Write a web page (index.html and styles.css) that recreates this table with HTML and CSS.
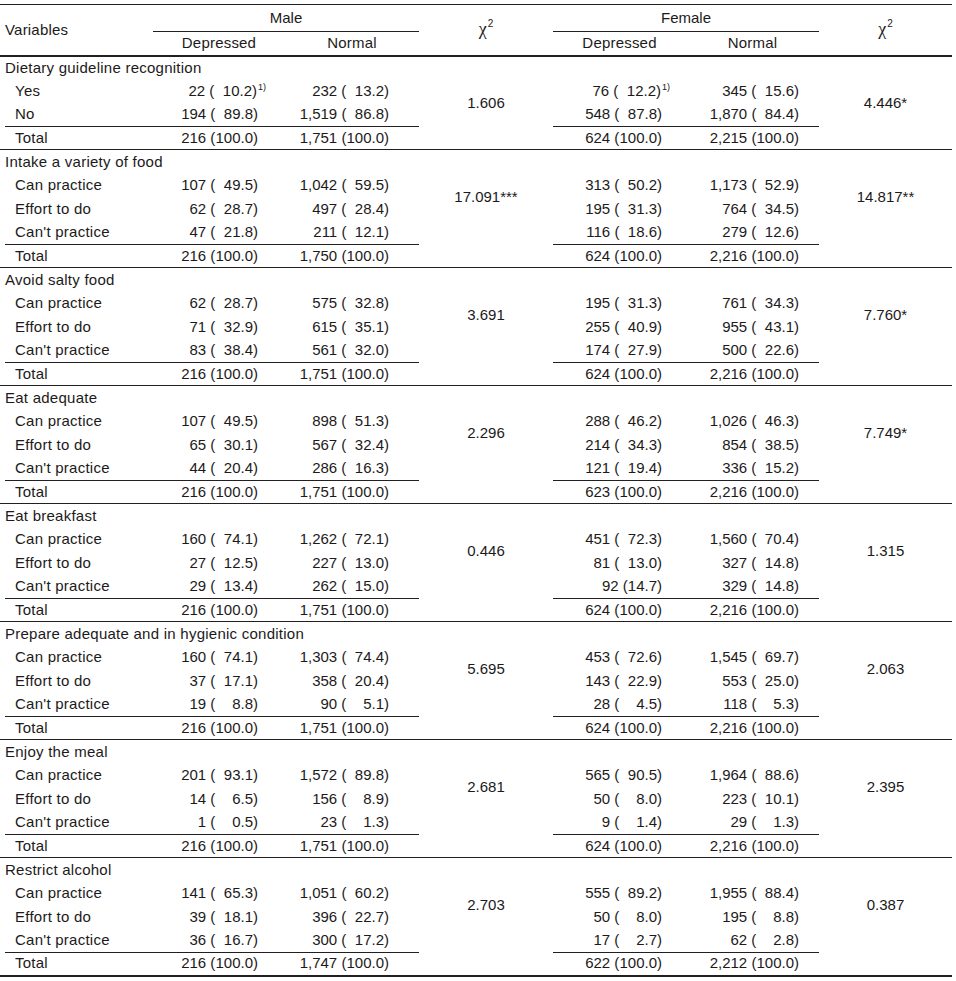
FILE: index.html
```html
<!DOCTYPE html>
<html lang="en">
<head>
<meta charset="utf-8">
<title>Dietary guideline practice by depression status</title>
<link rel="stylesheet" href="styles.css">
</head>
<body>
<table class="stat">
  <colgroup>
    <col class="c-var"><col class="c-md"><col class="c-mn"><col class="c-mx"><col class="c-fd"><col class="c-fn"><col class="c-fx">
  </colgroup>
  <thead>
    <tr class="h1">
      <th rowspan="2" class="var">Variables</th>
      <th colspan="2" class="grp">Male</th>
      <th rowspan="2" class="chi"><span class="chi-g">χ</span><sup class="chi-s">2</sup></th>
      <th colspan="2" class="grp">Female</th>
      <th rowspan="2" class="chi"><span class="chi-g">χ</span><sup class="chi-s">2</sup></th>
    </tr>
    <tr class="h2">
      <th>Depressed</th><th>Normal</th><th>Depressed</th><th>Normal</th>
    </tr>
  </thead>

  <tbody>
    <tr><td class="sec">Dietary guideline recognition</td><td></td><td></td><td rowspan="4" class="x">1.606</td><td></td><td></td><td rowspan="4" class="x">4.446*</td></tr>
    <tr><td class="item">Yes</td><td class="n md">22 (<span class="p">10.2</span>)<sup class="fn">1)</sup></td><td class="n mn">232 (<span class="p">13.2</span>)</td><td class="n fd">76 (<span class="p">12.2</span>)<sup class="fn">1)</sup></td><td class="n fn2">345 (<span class="p">15.6</span>)</td></tr>
    <tr><td class="item">No</td><td class="n md">194 (<span class="p">89.8</span>)</td><td class="n mn">1,519 (<span class="p">86.8</span>)</td><td class="n fd">548 (<span class="p">87.8</span>)</td><td class="n fn2">1,870 (<span class="p">84.4</span>)</td></tr>
    <tr class="tot"><td class="item">Total</td><td class="n md">216 (<span class="p">100.0</span>)</td><td class="n mn">1,751 (<span class="p">100.0</span>)</td><td class="n fd">624 (<span class="p">100.0</span>)</td><td class="n fn2">2,215 (<span class="p">100.0</span>)</td></tr>
  </tbody>

  <tbody>
    <tr><td class="sec">Intake a variety of food</td><td></td><td></td><td rowspan="4" class="x">17.091***</td><td></td><td></td><td rowspan="4" class="x">14.817**</td></tr>
    <tr><td class="item">Can practice</td><td class="n md">107 (<span class="p">49.5</span>)</td><td class="n mn">1,042 (<span class="p">59.5</span>)</td><td class="n fd">313 (<span class="p">50.2</span>)</td><td class="n fn2">1,173 (<span class="p">52.9</span>)</td></tr>
    <tr><td class="item">Effort to do</td><td class="n md">62 (<span class="p">28.7</span>)</td><td class="n mn">497 (<span class="p">28.4</span>)</td><td class="n fd">195 (<span class="p">31.3</span>)</td><td class="n fn2">764 (<span class="p">34.5</span>)</td></tr>
    <tr><td class="item">Can't practice</td><td class="n md">47 (<span class="p">21.8</span>)</td><td class="n mn">211 (<span class="p">12.1</span>)</td><td class="n fd">116 (<span class="p">18.6</span>)</td><td class="n fn2">279 (<span class="p">12.6</span>)</td></tr>
    <tr class="tot"><td class="item">Total</td><td class="n md">216 (<span class="p">100.0</span>)</td><td class="n mn">1,750 (<span class="p">100.0</span>)</td><td class="blank"></td><td class="n fd">624 (<span class="p">100.0</span>)</td><td class="n fn2">2,216 (<span class="p">100.0</span>)</td><td class="blank"></td></tr>
  </tbody>

  <tbody>
    <tr><td class="sec">Avoid salty food</td><td></td><td></td><td rowspan="4" class="x">3.691</td><td></td><td></td><td rowspan="4" class="x">7.760*</td></tr>
    <tr><td class="item">Can practice</td><td class="n md">62 (<span class="p">28.7</span>)</td><td class="n mn">575 (<span class="p">32.8</span>)</td><td class="n fd">195 (<span class="p">31.3</span>)</td><td class="n fn2">761 (<span class="p">34.3</span>)</td></tr>
    <tr><td class="item">Effort to do</td><td class="n md">71 (<span class="p">32.9</span>)</td><td class="n mn">615 (<span class="p">35.1</span>)</td><td class="n fd">255 (<span class="p">40.9</span>)</td><td class="n fn2">955 (<span class="p">43.1</span>)</td></tr>
    <tr><td class="item">Can't practice</td><td class="n md">83 (<span class="p">38.4</span>)</td><td class="n mn">561 (<span class="p">32.0</span>)</td><td class="n fd">174 (<span class="p">27.9</span>)</td><td class="n fn2">500 (<span class="p">22.6</span>)</td></tr>
    <tr class="tot"><td class="item">Total</td><td class="n md">216 (<span class="p">100.0</span>)</td><td class="n mn">1,751 (<span class="p">100.0</span>)</td><td class="blank"></td><td class="n fd">624 (<span class="p">100.0</span>)</td><td class="n fn2">2,216 (<span class="p">100.0</span>)</td><td class="blank"></td></tr>
  </tbody>

  <tbody>
    <tr><td class="sec">Eat adequate</td><td></td><td></td><td rowspan="4" class="x">2.296</td><td></td><td></td><td rowspan="4" class="x">7.749*</td></tr>
    <tr><td class="item">Can practice</td><td class="n md">107 (<span class="p">49.5</span>)</td><td class="n mn">898 (<span class="p">51.3</span>)</td><td class="n fd">288 (<span class="p">46.2</span>)</td><td class="n fn2">1,026 (<span class="p">46.3</span>)</td></tr>
    <tr><td class="item">Effort to do</td><td class="n md">65 (<span class="p">30.1</span>)</td><td class="n mn">567 (<span class="p">32.4</span>)</td><td class="n fd">214 (<span class="p">34.3</span>)</td><td class="n fn2">854 (<span class="p">38.5</span>)</td></tr>
    <tr><td class="item">Can't practice</td><td class="n md">44 (<span class="p">20.4</span>)</td><td class="n mn">286 (<span class="p">16.3</span>)</td><td class="n fd">121 (<span class="p">19.4</span>)</td><td class="n fn2">336 (<span class="p">15.2</span>)</td></tr>
    <tr class="tot"><td class="item">Total</td><td class="n md">216 (<span class="p">100.0</span>)</td><td class="n mn">1,751 (<span class="p">100.0</span>)</td><td class="blank"></td><td class="n fd">623 (<span class="p">100.0</span>)</td><td class="n fn2">2,216 (<span class="p">100.0</span>)</td><td class="blank"></td></tr>
  </tbody>

  <tbody>
    <tr><td class="sec">Eat breakfast</td><td></td><td></td><td rowspan="4" class="x">0.446</td><td></td><td></td><td rowspan="4" class="x">1.315</td></tr>
    <tr><td class="item">Can practice</td><td class="n md">160 (<span class="p">74.1</span>)</td><td class="n mn">1,262 (<span class="p">72.1</span>)</td><td class="n fd">451 (<span class="p">72.3</span>)</td><td class="n fn2">1,560 (<span class="p">70.4</span>)</td></tr>
    <tr><td class="item">Effort to do</td><td class="n md">27 (<span class="p">12.5</span>)</td><td class="n mn">227 (<span class="p">13.0</span>)</td><td class="n fd">81 (<span class="p">13.0</span>)</td><td class="n fn2">327 (<span class="p">14.8</span>)</td></tr>
    <tr><td class="item">Can't practice</td><td class="n md">29 (<span class="p">13.4</span>)</td><td class="n mn">262 (<span class="p">15.0</span>)</td><td class="n fd">92 (14.7)</td><td class="n fn2">329 (<span class="p">14.8</span>)</td></tr>
    <tr class="tot"><td class="item">Total</td><td class="n md">216 (<span class="p">100.0</span>)</td><td class="n mn">1,751 (<span class="p">100.0</span>)</td><td class="blank"></td><td class="n fd">624 (<span class="p">100.0</span>)</td><td class="n fn2">2,216 (<span class="p">100.0</span>)</td><td class="blank"></td></tr>
  </tbody>

  <tbody>
    <tr><td class="sec">Prepare adequate and in hygienic condition</td><td></td><td></td><td rowspan="4" class="x">5.695</td><td></td><td></td><td rowspan="4" class="x">2.063</td></tr>
    <tr><td class="item">Can practice</td><td class="n md">160 (<span class="p">74.1</span>)</td><td class="n mn">1,303 (<span class="p">74.4</span>)</td><td class="n fd">453 (<span class="p">72.6</span>)</td><td class="n fn2">1,545 (<span class="p">69.7</span>)</td></tr>
    <tr><td class="item">Effort to do</td><td class="n md">37 (<span class="p">17.1</span>)</td><td class="n mn">358 (<span class="p">20.4</span>)</td><td class="n fd">143 (<span class="p">22.9</span>)</td><td class="n fn2">553 (<span class="p">25.0</span>)</td></tr>
    <tr><td class="item">Can't practice</td><td class="n md">19 (<span class="p">8.8</span>)</td><td class="n mn">90 (<span class="p">5.1</span>)</td><td class="n fd">28 (<span class="p">4.5</span>)</td><td class="n fn2">118 (<span class="p">5.3</span>)</td></tr>
    <tr class="tot"><td class="item">Total</td><td class="n md">216 (<span class="p">100.0</span>)</td><td class="n mn">1,751 (<span class="p">100.0</span>)</td><td class="blank"></td><td class="n fd">624 (<span class="p">100.0</span>)</td><td class="n fn2">2,216 (<span class="p">100.0</span>)</td><td class="blank"></td></tr>
  </tbody>

  <tbody>
    <tr><td class="sec">Enjoy the meal</td><td></td><td></td><td rowspan="4" class="x">2.681</td><td></td><td></td><td rowspan="4" class="x">2.395</td></tr>
    <tr><td class="item">Can practice</td><td class="n md">201 (<span class="p">93.1</span>)</td><td class="n mn">1,572 (<span class="p">89.8</span>)</td><td class="n fd">565 (<span class="p">90.5</span>)</td><td class="n fn2">1,964 (<span class="p">88.6</span>)</td></tr>
    <tr><td class="item">Effort to do</td><td class="n md">14 (<span class="p">6.5</span>)</td><td class="n mn">156 (<span class="p">8.9</span>)</td><td class="n fd">50 (<span class="p">8.0</span>)</td><td class="n fn2">223 (<span class="p">10.1</span>)</td></tr>
    <tr><td class="item">Can't practice</td><td class="n md">1 (<span class="p">0.5</span>)</td><td class="n mn">23 (<span class="p">1.3</span>)</td><td class="n fd">9 (<span class="p">1.4</span>)</td><td class="n fn2">29 (<span class="p">1.3</span>)</td></tr>
    <tr class="tot"><td class="item">Total</td><td class="n md">216 (<span class="p">100.0</span>)</td><td class="n mn">1,751 (<span class="p">100.0</span>)</td><td class="blank"></td><td class="n fd">624 (<span class="p">100.0</span>)</td><td class="n fn2">2,216 (<span class="p">100.0</span>)</td><td class="blank"></td></tr>
  </tbody>

  <tbody class="last">
    <tr><td class="sec">Restrict alcohol</td><td></td><td></td><td rowspan="4" class="x">2.703</td><td></td><td></td><td rowspan="4" class="x">0.387</td></tr>
    <tr><td class="item">Can practice</td><td class="n md">141 (<span class="p">65.3</span>)</td><td class="n mn">1,051 (<span class="p">60.2</span>)</td><td class="n fd">555 (<span class="p">89.2</span>)</td><td class="n fn2">1,955 (<span class="p">88.4</span>)</td></tr>
    <tr><td class="item">Effort to do</td><td class="n md">39 (<span class="p">18.1</span>)</td><td class="n mn">396 (<span class="p">22.7</span>)</td><td class="n fd">50 (<span class="p">8.0</span>)</td><td class="n fn2">195 (<span class="p">8.8</span>)</td></tr>
    <tr><td class="item">Can't practice</td><td class="n md">36 (<span class="p">16.7</span>)</td><td class="n mn">300 (<span class="p">17.2</span>)</td><td class="n fd">17 (<span class="p">2.7</span>)</td><td class="n fn2">62 (<span class="p">2.8</span>)</td></tr>
    <tr class="tot"><td class="item">Total</td><td class="n md">216 (<span class="p">100.0</span>)</td><td class="n mn">1,747 (<span class="p">100.0</span>)</td><td class="blank"></td><td class="n fd">622 (<span class="p">100.0</span>)</td><td class="n fn2">2,212 (<span class="p">100.0</span>)</td><td class="blank"></td></tr>
  </tbody>
</table>
</body>
</html>
```

FILE: styles.css
```css
html, body {
  margin: 0;
  padding: 0;
  background: #ffffff;
}

body {
  font-family: "Liberation Sans", Arial, sans-serif;
  font-size: 15px;
  color: #1c1a1a;
}

.stat {
  width: 952px;
  table-layout: fixed;
  border-collapse: collapse;
  border-spacing: 0;
  margin-top: 4px;
  border-top: 1px solid #231f20;
}

.c-var { width: 153px; }
.c-md  { width: 132px; }
.c-mn  { width: 134px; }
.c-mx  { width: 134px; }
.c-fd  { width: 133px; }
.c-fn  { width: 133px; }
.c-fx  { width: 133px; }

.stat th,
.stat td {
  padding: 0;
  white-space: nowrap;
  font-weight: normal;
  vertical-align: middle;
  line-height: 18px;
}

.stat thead {
  border-bottom: 2px solid #231f20;
}

.h1 { height: 27px; }
.h2 { height: 24px; }

.stat th.var {
  text-align: left;
  padding-left: 5px;
  letter-spacing: 0.2px;
}

.stat th.grp {
  border-bottom: 1px solid #231f20;
}

.h2 th {
  letter-spacing: 0.2px;
}

.chi-g {
  font-family: "Liberation Serif", "Times New Roman", serif;
  font-size: 18px;
}

.chi-s {
  font-size: 10px;
  vertical-align: 8px;
  line-height: 0;
  margin-left: 1px;
}

.stat tbody {
  border-bottom: 1px solid #231f20;
}

.stat tbody.last {
  border-bottom: 2px solid #231f20;
}

.stat tbody tr {
  height: 23.6px;
}

.sec {
  padding-left: 5px !important;
  text-align: left;
  letter-spacing: 0.25px;
}

.item {
  padding-left: 15px !important;
  text-align: left;
  letter-spacing: 0.25px;
}

.n {
  text-align: right;
}

.md  { padding-right: 27px !important; }
.mn  { padding-right: 30px !important; }
.fd  { padding-right: 24px !important; }
.fn2 { padding-right: 20px !important; }

.p {
  display: inline-block;
  width: 2.51em;
  text-align: right;
}

.fn {
  display: inline-block;
  width: 0;
  font-size: 9px;
  line-height: 0;
  vertical-align: 6px;
  white-space: nowrap;
  padding-left: 1px;
  letter-spacing: 0;
}

.x {
  text-align: center;
}

.tot td {
  background: linear-gradient(#231f20, #231f20) no-repeat 0 0 / 100% 1px;
}

.tot td.item {
  background-position: 5px 0;
  background-size: calc(100% - 5px) 1px;
}

.tot td.blank {
  background: none;
}
```
